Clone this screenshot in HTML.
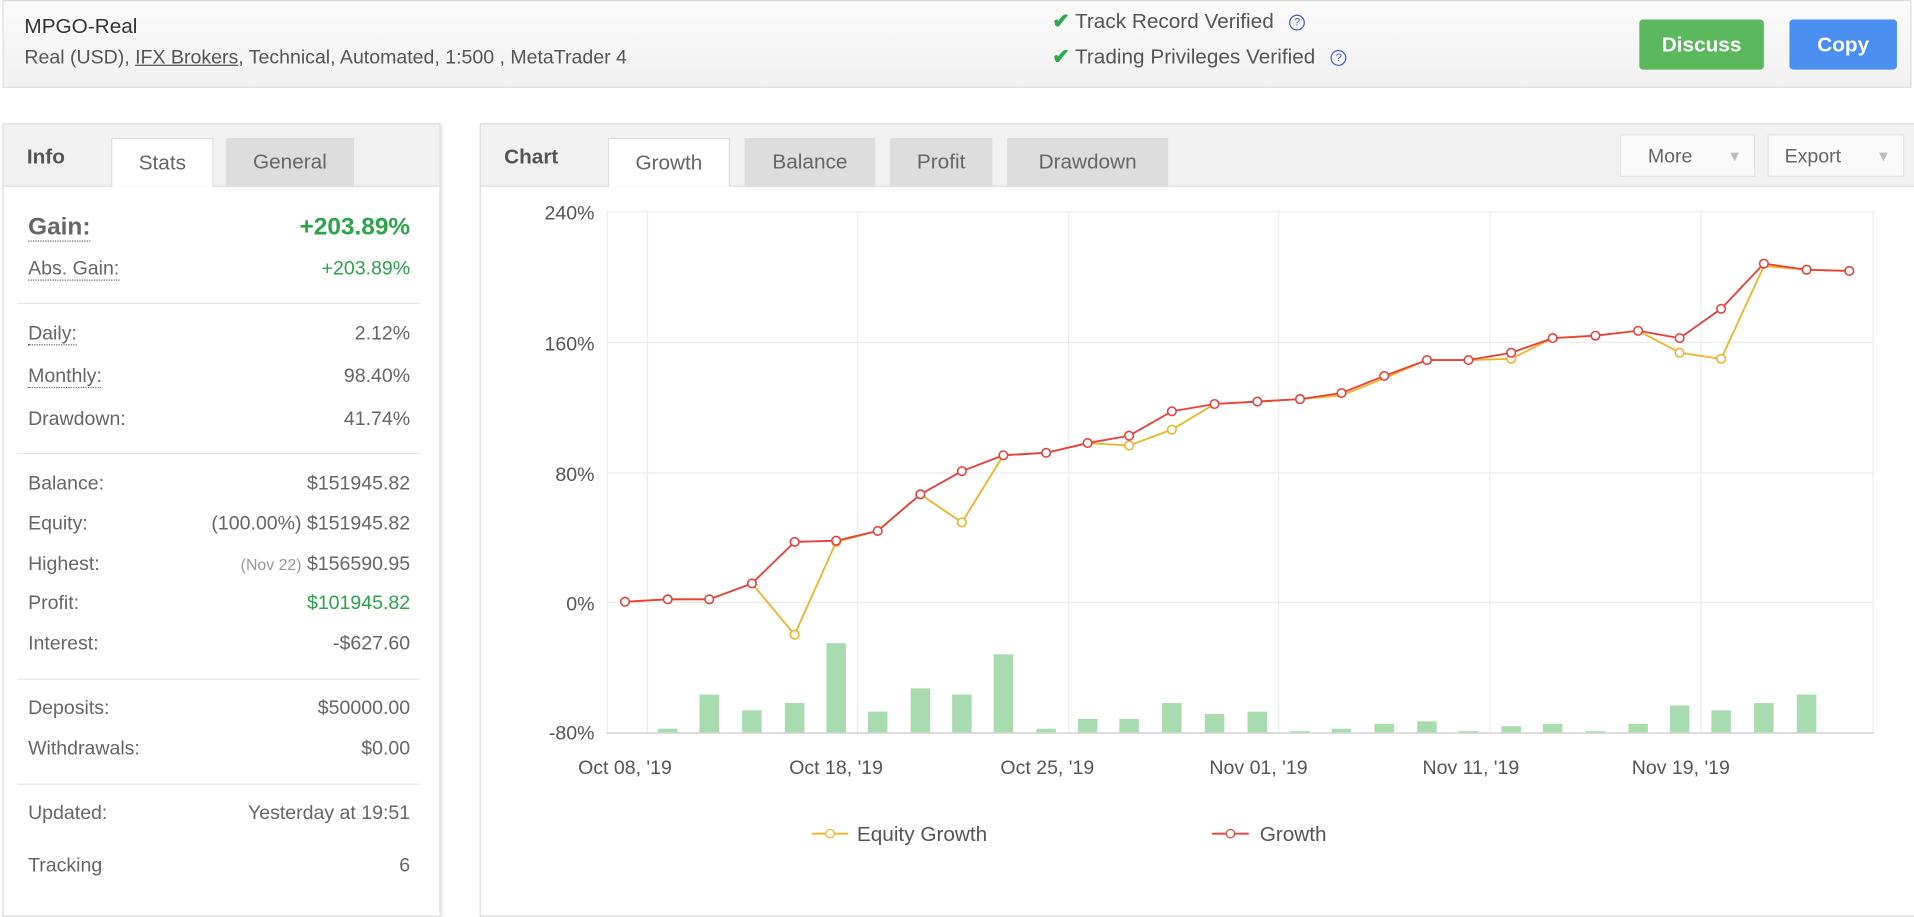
<!DOCTYPE html>
<html><head><meta charset="utf-8"><style>
*{margin:0;padding:0;box-sizing:border-box}
html,body{width:1914px;height:902px;overflow:hidden;background:#fff}
#w{position:absolute;left:0;top:0;width:1568px;height:739px;transform:scale(1.22066,1.22057);transform-origin:0 0;font-family:"Liberation Sans",sans-serif;color:#555}
.a{position:absolute;white-space:nowrap}
.hdr{left:2px;top:0;width:1564px;height:72px;background:linear-gradient(#fbfbfb,#f1f1f1);border:1px solid #ddd}
.btn{color:#fff;font-weight:bold;font-size:17px;text-align:center;line-height:41px;border-radius:3px}
.panel{border:1px solid #ddd;background:#fff;box-shadow:1px 1px 3px #ddd}
.ph{background:#f1f1f1;border-bottom:1px solid #ddd}
.tab{top:113px;height:40px;line-height:40px;font-size:17px;text-align:center;color:#666;background:#ddd}
.tab.on{background:#fff;border:1px solid #ddd;border-bottom:none}
.l{left:23px;font-size:16px;color:#666}
.v{left:0;width:336px;text-align:right;font-size:16px;color:#666}
.d{border-bottom:1px dotted #666}
.sep{left:14px;width:330px;height:1px;background:#e6e6e6}
.g{color:#2aa54a}
.q{display:inline-block;width:13px;height:13px;border:1px solid #4a5fbf;border-radius:50%;font-size:9px;line-height:11px;text-align:center;color:#4a5fbf;vertical-align:middle;margin-left:8px}
.ck{color:#2fa84f;font-weight:bold}
.dd{top:110px;height:35px;line-height:35px;border:1px solid #e3e3e3;background:#fafafa;font-size:16px;color:#666;padding-left:22px}
.dd span{position:absolute;right:10px;color:#bbb;font-size:12px}
</style></head><body><div id="w">
<div class="a hdr"></div>
<div class="a" style="left:20px;top:12px;font-size:17px;color:#333">MPGO-Real</div>
<div class="a" style="left:20px;top:39px;font-size:16px;color:#555">Real (USD), <u>IFX Brokers</u>, Technical, Automated, 1:500 , MetaTrader 4</div>
<div class="a" style="left:862px;top:8px;font-size:17px;color:#555"><span class="ck">✔</span> Track Record Verified <span class="q">?</span></div>
<div class="a" style="left:862px;top:37px;font-size:17px;color:#555"><span class="ck">✔</span> Trading Privileges Verified <span class="q">?</span></div>
<div class="a btn" style="left:1343px;top:16px;width:102px;height:41px;background:#5cb85c">Discuss</div>
<div class="a btn" style="left:1466px;top:16px;width:88px;height:41px;background:#4a8ef0">Copy</div>

<div class="a panel" style="left:2px;top:101px;width:359px;height:650px"></div>
<div class="a ph" style="left:3px;top:102px;width:357px;height:51px"></div>
<div class="a" style="left:22px;top:119px;font-size:17px;font-weight:bold;color:#555">Info</div>
<div class="a tab on" style="left:91px;width:84px">Stats</div>
<div class="a tab" style="left:185px;width:105px">General</div>
<div class="a" style="left:23px;top:175px;font-size:20px;font-weight:bold;color:#666"><span class="d">Gain:</span></div>
<div class="a v g" style="top:175px;font-size:20px;font-weight:bold">+203.89%</div>
<div class="a l" style="top:212px"><span class="d">Abs. Gain:</span></div><div class="a v g" style="top:212px">+203.89%</div>
<div class="a sep" style="top:248px"></div>
<div class="a l" style="top:265px"><span class="d">Daily:</span></div><div class="a v" style="top:265px">2.12%</div>
<div class="a l" style="top:300px"><span class="d">Monthly:</span></div><div class="a v" style="top:300px">98.40%</div>
<div class="a l" style="top:335px">Drawdown:</div><div class="a v" style="top:335px">41.74%</div>
<div class="a sep" style="top:371px"></div>
<div class="a l" style="top:388px">Balance:</div><div class="a v" style="top:388px">$151945.82</div>
<div class="a l" style="top:421px">Equity:</div><div class="a v" style="top:421px">(100.00%) $151945.82</div>
<div class="a l" style="top:454px">Highest:</div><div class="a v" style="top:454px"><span style="font-size:13px;color:#999">(Nov 22)</span> $156590.95</div>
<div class="a l" style="top:486px">Profit:</div><div class="a v g" style="top:486px">$101945.82</div>
<div class="a l" style="top:519px">Interest:</div><div class="a v" style="top:519px">-$627.60</div>
<div class="a sep" style="top:556px"></div>
<div class="a l" style="top:572px">Deposits:</div><div class="a v" style="top:572px">$50000.00</div>
<div class="a l" style="top:605px">Withdrawals:</div><div class="a v" style="top:605px">$0.00</div>
<div class="a sep" style="top:642px"></div>
<div class="a l" style="top:658px">Updated:</div><div class="a v" style="top:658px">Yesterday at 19:51</div>
<div class="a l" style="top:701px">Tracking</div><div class="a v" style="top:701px">6</div>

<div class="a panel" style="left:393px;top:101px;width:1180px;height:650px"></div>
<div class="a ph" style="left:394px;top:102px;width:1174px;height:51px"></div>
<div class="a" style="left:413px;top:119px;font-size:17px;font-weight:bold;color:#555">Chart</div>
<div class="a tab on" style="left:498px;width:100px">Growth</div>
<div class="a tab" style="left:610px;width:107px">Balance</div>
<div class="a tab" style="left:729px;width:84px">Profit</div>
<div class="a tab" style="left:825px;width:132px">Drawdown</div>
<div class="a dd" style="left:1327px;width:111px">More<span>▼</span></div>
<div class="a dd" style="left:1448px;width:112px;padding-left:13px">Export<span>▼</span></div>

<svg class="a" style="left:0;top:0" width="1568" height="739" font-family="Liberation Sans,sans-serif" font-size="16" fill="#555">
<g stroke="#ececec" stroke-width="1">
<line x1="497" y1="173.5" x2="1535" y2="173.5"/><line x1="497" y1="280.5" x2="1535" y2="280.5"/><line x1="497" y1="387.5" x2="1535" y2="387.5"/><line x1="497" y1="493.5" x2="1535" y2="493.5"/><line x1="497" y1="600.5" x2="1535" y2="600.5"/>
<line x1="497.5" y1="173" x2="497.5" y2="600"/><line x1="530.5" y1="173" x2="530.5" y2="600"/><line x1="702.5" y1="173" x2="702.5" y2="600"/><line x1="875.5" y1="173" x2="875.5" y2="600"/><line x1="1047.5" y1="173" x2="1047.5" y2="600"/><line x1="1220.5" y1="173" x2="1220.5" y2="600"/><line x1="1393.5" y1="173" x2="1393.5" y2="600"/><line x1="1534.5" y1="173" x2="1534.5" y2="600"/>
</g>
<line x1="497" y1="600.5" x2="1535" y2="600.5" stroke="#ccc"/>
<g text-anchor="end"><text x="487" y="180">240%</text><text x="487" y="287">160%</text><text x="487" y="394">80%</text><text x="487" y="500">0%</text><text x="487" y="606">-80%</text></g>
<g text-anchor="middle"><text x="512" y="634">Oct 08, '19</text><text x="685" y="634">Oct 18, '19</text><text x="858" y="634">Oct 25, '19</text><text x="1031" y="634">Nov 01, '19</text><text x="1205" y="634">Nov 11, '19</text><text x="1377" y="634">Nov 19, '19</text></g>
<g fill="#a8dcb0">
<rect x="539" y="597" width="16" height="3"/><rect x="573" y="569" width="16" height="31"/><rect x="608" y="582" width="16" height="18"/><rect x="643" y="576" width="16" height="24"/><rect x="677" y="527" width="16" height="73"/><rect x="711" y="583" width="16" height="17"/><rect x="746" y="564" width="16" height="36"/><rect x="780" y="569" width="16" height="31"/><rect x="814" y="536" width="16" height="64"/><rect x="849" y="597" width="16" height="3"/><rect x="883" y="589" width="16" height="11"/><rect x="917" y="589" width="16" height="11"/><rect x="952" y="576" width="16" height="24"/><rect x="987" y="585" width="16" height="15"/><rect x="1022" y="583" width="16" height="17"/><rect x="1057" y="599" width="16" height="1"/><rect x="1091" y="597" width="16" height="3"/><rect x="1126" y="593" width="16" height="7"/><rect x="1161" y="591" width="16" height="9"/><rect x="1195" y="599" width="16" height="1"/><rect x="1230" y="595" width="16" height="5"/><rect x="1264" y="593" width="16" height="7"/><rect x="1299" y="599" width="16" height="1"/><rect x="1334" y="593" width="16" height="7"/><rect x="1368" y="578" width="16" height="22"/><rect x="1402" y="582" width="16" height="18"/><rect x="1437" y="576" width="16" height="24"/><rect x="1472" y="569" width="16" height="31"/>
</g>
<polyline fill="none" stroke="#f0b429" stroke-width="1.5" points="512,493 547,491 581,491 616,478 651,520 685,444 719,435 754,405 788,428 822,373 857,371 891,363 925,365 960,352 995,331 1030,329 1065,327 1099,324 1134,310 1169,295 1203,295 1238,294 1272,277 1307,275 1342,271 1376,289 1410,294 1445,218 1480,221 1515,222"/>
<g fill="#fff" stroke="#f0b429" stroke-width="1.3"><circle cx="651" cy="520" r="3.5"/><circle cx="685" cy="444" r="3.5"/><circle cx="788" cy="428" r="3.5"/><circle cx="925" cy="365" r="3.5"/><circle cx="960" cy="352" r="3.5"/><circle cx="1238" cy="294" r="3.5"/><circle cx="1376" cy="289" r="3.5"/><circle cx="1410" cy="294" r="3.5"/></g>
<polyline fill="none" stroke="#e8413c" stroke-width="1.5" points="512,493 547,491 581,491 616,478 651,444 685,443 719,435 754,405 788,386 822,373 857,371 891,363 925,357 960,337 995,331 1030,329 1065,327 1099,322 1134,308 1169,295 1203,295 1238,289 1272,277 1307,275 1342,271 1376,277 1410,253 1445,216 1480,221 1515,222"/>
<g fill="#fff" stroke="#e8413c" stroke-width="1.3">
<circle cx="512" cy="493" r="3.5"/><circle cx="547" cy="491" r="3.5"/><circle cx="581" cy="491" r="3.5"/><circle cx="616" cy="478" r="3.5"/><circle cx="651" cy="444" r="3.5"/><circle cx="685" cy="443" r="3.5"/><circle cx="719" cy="435" r="3.5"/><circle cx="754" cy="405" r="3.5"/><circle cx="788" cy="386" r="3.5"/><circle cx="822" cy="373" r="3.5"/><circle cx="857" cy="371" r="3.5"/><circle cx="891" cy="363" r="3.5"/><circle cx="925" cy="357" r="3.5"/><circle cx="960" cy="337" r="3.5"/><circle cx="995" cy="331" r="3.5"/><circle cx="1030" cy="329" r="3.5"/><circle cx="1065" cy="327" r="3.5"/><circle cx="1099" cy="322" r="3.5"/><circle cx="1134" cy="308" r="3.5"/><circle cx="1169" cy="295" r="3.5"/><circle cx="1203" cy="295" r="3.5"/><circle cx="1238" cy="289" r="3.5"/><circle cx="1272" cy="277" r="3.5"/><circle cx="1307" cy="275" r="3.5"/><circle cx="1342" cy="271" r="3.5"/><circle cx="1376" cy="277" r="3.5"/><circle cx="1410" cy="253" r="3.5"/><circle cx="1445" cy="216" r="3.5"/><circle cx="1480" cy="221" r="3.5"/><circle cx="1515" cy="222" r="3.5"/></g>
<line x1="665" y1="683" x2="695" y2="683" stroke="#f0b429" stroke-width="1.5"/><circle cx="680" cy="683" r="3.5" fill="#fff" stroke="#f0b429"/>
<text x="702" y="689" font-size="17">Equity Growth</text>
<line x1="993" y1="683" x2="1023" y2="683" stroke="#e8413c" stroke-width="1.5"/><circle cx="1008" cy="683" r="3.5" fill="#fff" stroke="#e8413c"/>
<text x="1032" y="689" font-size="17">Growth</text>
</svg>
</div></body></html>
